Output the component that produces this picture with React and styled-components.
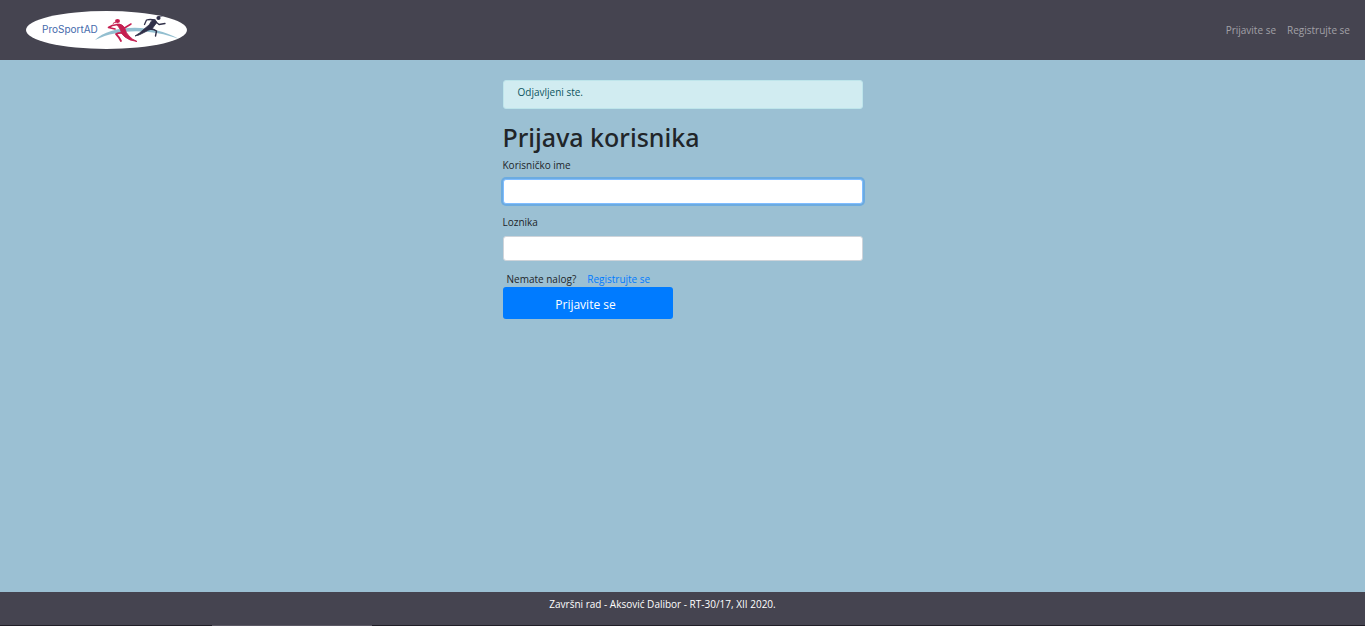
import React from "react";
import styled, { createGlobalStyle } from "styled-components";

const GlobalStyle = createGlobalStyle`
  *, *::before, *::after { box-sizing: border-box; }
  body {
    margin: 0;
    background: #9bc0d3;
    color: #212529;
    font-family: "Segoe UI", "Open Sans", "Noto Sans", sans-serif;
    font-size: 10px;
    line-height: 16px;
  }
`;

const Page = styled.div`
  min-height: 100vh;
  display: flex;
  flex-direction: column;
`;

const Header = styled.header`
  display: flex;
  align-items: center;
  justify-content: space-between;
  height: 60px;
  padding: 0 15px 0 26px;
  background: #454450;
`;

const Brand = styled.a`
  display: block;
  height: 38px;
`;

const Nav = styled.nav`
  display: flex;
  gap: 11px;
`;

const NavLink = styled.a`
  color: #a2a1a7;
  text-decoration: none;
`;

const Main = styled.main`
  flex: 1;
  width: 100%;
  max-width: 360px;
  margin: 0 auto;
  padding-top: 20px;
`;

const Alert = styled.div`
  height: 29px;
  padding: 3px 14px;
  border: 1px solid #bee5eb;
  border-radius: 3px;
  background: #d1ecf1;
  color: #0c5460;
`;

const Title = styled.h1`
  margin: 11px 0 3px;
  font-family: "Segoe UI", "Noto Sans", sans-serif;
  font-size: 25px;
  line-height: 34px;
  font-weight: 500;
`;

const Field = styled.div`
  display: flex;
  flex-direction: column;
  gap: 6px;
  margin-bottom: 10px;
`;

const Input = styled.input`
  width: 100%;
  height: 25px;
  padding: 4px 8px;
  border: 1px solid ${(p) => (p.$active ? "#80bdff" : "#ced4da")};
  border-radius: 3px;
  background: #fff;
  font: inherit;
  outline: none;
  box-shadow: ${(p) => (p.$active ? "0 0 0 2px rgba(0, 123, 255, 0.3)" : "none")};
`;

const Prompt = styled.div`
  display: flex;
  gap: 11px;
  padding-left: 4px;
`;

const TextLink = styled.a`
  color: #007bff;
  text-decoration: none;
`;

const Submit = styled.button`
  display: block;
  width: 170px;
  height: 32px;
  padding: 3px 4px 0 0;
  border: 0;
  border-radius: 3px;
  background: #007bff;
  color: #fff;
  font: inherit;
  font-size: 12px;
`;

const Footer = styled.footer`
  height: 34px;
  padding: 4px 40px 0 0;
  background:
    linear-gradient(#5b5864, #5b5864) 212px 100% / 160px 1px no-repeat,
    linear-gradient(#201e27, #201e27) 0 100% / 100% 1px no-repeat,
    #454450;
  color: #fff;
  text-align: center;
`;

function Logo() {
  return (
    <svg width="161" height="38" viewBox="0 0 161 38" role="img" aria-label="ProSportAD">
      <ellipse cx="80.5" cy="19" rx="80.5" ry="19" fill="#fff" />
      <path d="M69 29C83 15 123 11 153 28C126 18 94 17 69 29Z" fill="#93bfd0" />
      <text x="16" y="22" fill="#456aac" fontFamily="Inter, Arial, sans-serif" fontSize="10">
        ProSportAD
      </text>
      <g fill="none" stroke="#c51f51" strokeLinecap="round" strokeLinejoin="round">
        <ellipse cx="91.5" cy="10" rx="2.5" ry="2" fill="#c51f51" stroke="none" />
        <path d="M89.5 11.5Q88 11 87 12.5" strokeWidth="1" />
        <path d="M93 14Q87 13 82.5 16.5L89 18" strokeWidth="1.6" />
        <path d="M94 14L98.5 17L105 13" strokeWidth="1.5" />
        <path d="M91 13Q97 12.5 99 18Q100 22 103 25Q106 28.5 111 30.5Q103 29.5 99 26Q95 23 94.5 19Z" fill="#c51f51" strokeWidth="0.9" />
        <path d="M97 22Q93 21.5 90 23Q93 26 95 30" strokeWidth="1.8" />
      </g>
      <g fill="none" stroke="#303049" strokeLinecap="round" strokeLinejoin="round">
        <ellipse cx="132.5" cy="7" rx="2.1" ry="1.9" fill="#303049" stroke="none" />
        <path d="M133 5.5L136 5" strokeWidth="0.8" />
        <path d="M129 9Q124 8 120.5 9L118.5 13.5" strokeWidth="1.3" />
        <path d="M130 11L133 13.5L139 12.5" strokeWidth="1.3" />
        <path d="M126 9.5Q131 8 130.5 12Q128 15 126 18Q122 19 119 21Q114 24 109 25Q114 22 117 19Q120 16.5 123 14Z" fill="#303049" strokeWidth="0.8" />
        <path d="M124 18Q128 18 130.5 20L129.5 25" strokeWidth="1.4" />
      </g>
    </svg>
  );
}

export default function App() {
  return (
    <>
      <GlobalStyle />
      <Page>
        <Header>
          <Brand href="#"><Logo /></Brand>
          <Nav>
            <NavLink href="#prijava">Prijavite se</NavLink>
            <NavLink href="#registracija">Registrujte se</NavLink>
          </Nav>
        </Header>
        <Main>
          <Alert role="status">Odjavljeni ste.</Alert>
          <Title>Prijava korisnika</Title>
          <form>
            <Field>
              <label htmlFor="username">Korisničko ime</label>
              <Input id="username" type="text" $active />
            </Field>
            <Field>
              <label htmlFor="password">Loznika</label>
              <Input id="password" type="password" />
            </Field>
            <Prompt>
              <span>Nemate nalog?</span>
              <TextLink href="#registracija">Registrujte se</TextLink>
            </Prompt>
            <Submit type="button">Prijavite se</Submit>
          </form>
        </Main>
        <Footer>Završni rad - Aksović Dalibor - RT-30/17, XII 2020.</Footer>
      </Page>
    </>
  );
}
